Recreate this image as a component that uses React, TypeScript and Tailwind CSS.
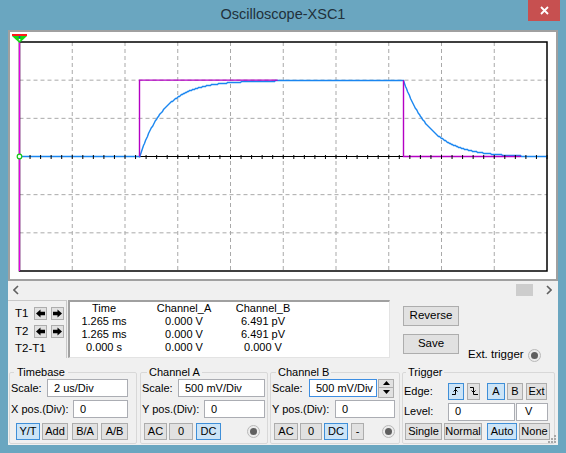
import React from "react";

const btnBase =
  "h-[17px] border flex items-center justify-center text-[11px] leading-none whitespace-nowrap text-black shrink-0";

function Btn({
  children,
  active,
  className = ""
}: {
  children: React.ReactNode;
  active?: boolean;
  className?: string;
}) {
  return (
    <button
      type="button"
      className={`${btnBase} ${
        active ? "bg-[#cce4f7] border-[#3f8fd8]" : "bg-[#e1e1e1] border-[#adadad]"
      } ${className}`}
    >
      {children}
    </button>
  );
}

function Field({
  value,
  focused,
  className = ""
}: {
  value: string;
  focused?: boolean;
  className?: string;
}) {
  return (
    <div
      className={`h-[18px] bg-white border ${
        focused ? "border-[#3d8ee2]" : "border-[#abadb3]"
      } flex items-center pl-[6px] text-[11px] shrink-0 ${className}`}
    >
      {value}
    </div>
  );
}

function Radio() {
  return (
    <span className="w-[13px] h-[13px] rounded-full border border-[#b9b9b9] bg-[#ececec] flex items-center justify-center shrink-0">
      <span className="w-[7px] h-[7px] rounded-full bg-[#5f5f5f]" />
    </span>
  );
}

function ArrowBtn({ dir }: { dir: "l" | "r" }) {
  return (
    <div className="w-[13px] h-[13px] bg-[#e1e1e1] border border-[#adadad] flex items-center justify-center">
      <svg width="9" height="9" viewBox="0 0 10 10">
        <polygon
          points={
            dir === "l"
              ? "0,5 5,0.5 5,3 10,3 10,7 5,7 5,9.5"
              : "10,5 5,0.5 5,3 0,3 0,7 5,7 5,9.5"
          }
          fill="#000"
        />
      </svg>
    </div>
  );
}

function EdgeIcon({ rising }: { rising?: boolean }) {
  return (
    <svg width="10" height="10" viewBox="0 0 10 10" fill="none" stroke="#000" strokeWidth="1">
      {rising ? (
        <>
          <path d="M1 8.5H4.5V1.5H9" />
          <path d="M2.5 5.5L4.5 3.5L6.5 5.5" />
        </>
      ) : (
        <>
          <path d="M1 1.5H4.5V8.5H9" />
          <path d="M2.5 4.5L4.5 6.5L6.5 4.5" />
        </>
      )}
    </svg>
  );
}

function Plot() {
  const x0 = 19.5;
  const x1 = 547;
  const y0 = 42;
  const y1 = 271;
  const dx = (x1 - x0) / 10;
  const dy = (y1 - y0) / 6;
  const yMid = y0 + 3 * dy;
  const yTop = yMid - 2 * dy;
  const up = 139.5;
  const down = 403.5;

  const pts: string[] = [`${x0},${yMid}`, `${up},${yMid}`];
  for (let x = up; x <= down; x += 1) {
    const y = yMid - 2 * dy * (1 - Math.exp(-(x - up) / 25));
    pts.push(`${x},${Math.round(y) + 0.5}`);
  }
  for (let x = down; x <= x1; x += 1) {
    const y = yMid - 2 * dy * Math.exp(-(x - down) / 27);
    pts.push(`${x},${Math.round(y) + 0.5}`);
  }

  const ticks = Array.from({ length: 51 }, (_, i) => x0 + (i * dx) / 5);

  return (
    <svg width="546" height="247" viewBox="10 32 546 247" className="block">
      {/* grid */}
      {Array.from({ length: 9 }, (_, i) => (
        <line
          key={`v${i}`}
          x1={x0 + (i + 1) * dx}
          x2={x0 + (i + 1) * dx}
          y1={y0}
          y2={y1}
          stroke="#a9a9a9"
          strokeWidth="1"
          strokeDasharray="4 3"
        />
      ))}
      {[1, 2, 4, 5].map((j) => (
        <line
          key={`h${j}`}
          x1={x0}
          x2={x1}
          y1={y0 + j * dy}
          y2={y0 + j * dy}
          stroke="#a9a9a9"
          strokeWidth="1"
          strokeDasharray="4 3"
        />
      ))}
      <rect x={x0} y={y0} width={x1 - x0} height={y1 - y0} fill="none" stroke="#000" strokeWidth="1.5" />
      <line x1={x0} x2={x1} y1={yMid} y2={yMid} stroke="#000" strokeWidth="1" />

      {/* channel B */}
      <polyline points={pts.join(" ")} fill="none" stroke="#1a86f0" strokeWidth="1.4" />
      {/* channel A */}
      <path
        d={`M${up} ${yMid}V${yTop}H277.7M${down} ${yTop}V${yMid}H520.7`}
        fill="none"
        stroke="#b400c4"
        strokeWidth="1.4"
      />

      {ticks.map((x, i) => (
        <line key={`t${i}`} x1={x} x2={x} y1={yMid - 1.5} y2={yMid + 2.5} stroke="#000" strokeWidth="1" />
      ))}

      {/* cursor */}
      <line x1={x0} x2={x0} y1={y0} y2={y1} stroke="#e400e4" strokeWidth="1.3" />
      <rect x="12" y="34" width="15" height="2" fill="#ff1a1a" />
      <polygon points="12,36 27,36 19.5,43" fill="#14d814" />
      <rect x="18.8" y="36.5" width="1.5" height="1.5" fill="#1a1aff" />
      <rect x="18.8" y="39" width="1.5" height="1.5" fill="#ffffff" />
      <circle cx={x0} cy={yMid} r="2.3" fill="#fff" stroke="#14c814" strokeWidth="1.2" />
    </svg>
  );
}

const rows = [
  ["Time", "Channel_A", "Channel_B"],
  ["1.265 ms", "0.000 V", "6.491 pV"],
  ["1.265 ms", "0.000 V", "6.491 pV"],
  ["0.000 s", "0.000 V", "0.000 V"]
];

export default function App() {
  return (
    <div className="w-[566px] h-[453px] bg-[#6aa6c0] flex flex-col px-[8px] pb-[8px] font-['Liberation_Sans',Arial,sans-serif] text-black">
      {/* title bar */}
      <div className="relative h-[30px] flex items-center justify-center text-[14.5px] text-[#21313b]">
        Oscilloscope-XSC1
        <div className="absolute top-0 right-[-2px] w-[32px] h-[21px] bg-[#c75050] flex items-center justify-center">
          <svg width="9" height="9" viewBox="0 0 9 9" stroke="#fff" strokeWidth="1.8">
            <path d="M1 1L8 8M8 1L1 8" />
          </svg>
        </div>
      </div>

      <div className="relative flex-1 bg-[#f0f0f0] flex flex-col">
        {/* plot */}
        <div className="h-[251px] border-2 border-[#a0a0a0] bg-white">
          <Plot />
        </div>

        {/* scrollbar */}
        <div className="h-[17px] flex items-center pl-[5px] pr-[6px]">
          <svg width="6" height="10" viewBox="0 0 6 10" fill="none" stroke="#606060" strokeWidth="1.6">
            <path d="M5 1L1 5L5 9" />
          </svg>
          <div className="flex-1" />
          <div className="w-[17px] h-[12px] bg-[#cdcdcd]" />
          <svg width="6" height="10" viewBox="0 0 6 10" fill="none" stroke="#606060" strokeWidth="1.6" className="ml-[13px]">
            <path d="M1 1L5 5L1 9" />
          </svg>
        </div>

        {/* readout row */}
        <div className="h-[60px] flex pt-[2px]">
          <div className="w-[59px] h-[58px] border-t border-r border-[#c8c8c8] pt-[6px] pl-[7px] text-[11.5px]">
            <div className="h-[13px] flex items-center">
              <span className="w-[19px]">T1</span>
              <ArrowBtn dir="l" />
              <div className="w-[4px]" />
              <ArrowBtn dir="r" />
            </div>
            <div className="h-[13px] flex items-center mt-[5px]">
              <span className="w-[19px]">T2</span>
              <ArrowBtn dir="l" />
              <div className="w-[4px]" />
              <ArrowBtn dir="r" />
            </div>
            <div className="mt-[3px] leading-[14px]">T2-T1</div>
          </div>

          <div className="ml-[1px] w-[322px] h-[58px] bg-white border-t-2 border-l-2 border-[#a0a0a0] border-b border-r border-b-[#e3e3e3] border-r-[#e3e3e3]">
            <div className="grid grid-cols-[68px_92px_66px] text-[11px] leading-[13px]">
              {rows.map((r, i) =>
                r.map((c, j) => (
                  <div key={`${i}-${j}`} className="text-center whitespace-nowrap">
                    {c}
                  </div>
                ))
              )}
            </div>
          </div>

          <div className="flex">
            <div className="flex flex-col ml-[13px]">
              <button type="button" className="mt-[6px] w-[56px] h-[20px] bg-[#e1e1e1] border border-[#adadad] text-[11.5px]">
                Reverse
              </button>
              <button type="button" className="mt-[8px] w-[56px] h-[20px] bg-[#e1e1e1] border border-[#adadad] text-[11.5px]">
                Save
              </button>
            </div>
            <div className="self-start mt-[48px] ml-[9px] h-[14px] flex items-center gap-[4px] text-[11.5px] whitespace-nowrap">
              Ext. trigger
              <Radio />
            </div>
          </div>
        </div>

        {/* control groups */}
        <div className="flex mt-[7px] text-[11px]">
          {/* Timebase */}
          <fieldset className="ml-[1px] w-[128px] border border-[#d8d8d8] rounded-[2px] pb-[3px]">
            <legend className="ml-[4px] px-[3px] leading-[14px]">Timebase</legend>
            <div className="h-[18px] flex items-center pl-[1px]">
              <span className="w-[36px]">Scale:</span>
              <Field value="2 us/Div" className="w-[81px] pl-[5px]" />
            </div>
            <div className="h-[18px] flex items-center pl-[1px] mt-[3px]">
              <span className="w-[62px] whitespace-nowrap">X pos.(Div):</span>
              <Field value="0" className="w-[55px]" />
            </div>
            <div className="h-[17px] flex items-center pl-[6px] mt-[5px]">
              <Btn active className="w-[24px]">Y/T</Btn>
              <Btn className="w-[26px] ml-[2px]">Add</Btn>
              <Btn className="w-[26px] ml-[4px]">B/A</Btn>
              <Btn className="w-[27px] ml-[3px]">A/B</Btn>
            </div>
          </fieldset>

          {/* Channel A */}
          <fieldset className="ml-[3px] w-[128px] border border-[#d8d8d8] rounded-[2px] pb-[3px]">
            <legend className="ml-[6px] px-[2px] leading-[14px]">Channel A</legend>
            <div className="h-[18px] flex items-center pl-[1px]">
              <span className="w-[36px]">Scale:</span>
              <Field value="500 mV/Div" className="w-[87px]" />
            </div>
            <div className="h-[18px] flex items-center pl-[1px] mt-[3px]">
              <span className="w-[62px] whitespace-nowrap">Y pos.(Div):</span>
              <Field value="0" className="w-[61px]" />
            </div>
            <div className="h-[17px] flex items-center pl-[3px] mt-[5px]">
              <Btn className="w-[23px]">AC</Btn>
              <Btn className="w-[24px] ml-[2px]">0</Btn>
              <Btn active className="w-[25px] ml-[3px]">DC</Btn>
              <div className="ml-[26px]">
                <Radio />
              </div>
            </div>
          </fieldset>

          {/* Channel B */}
          <fieldset className="ml-[2px] w-[130px] border border-[#d8d8d8] rounded-[2px] pb-[3px]">
            <legend className="ml-[5px] px-[2px] leading-[14px]">Channel B</legend>
            <div className="h-[18px] flex items-center pl-[1px]">
              <span className="w-[37px]">Scale:</span>
              <Field value="500 mV/Div" focused className="w-[68px]" />
              <div className="ml-[1px] w-[16px] h-[19px] flex flex-col">
                <div className="h-[9.5px] bg-[#e1e1e1] border border-[#adadad] flex items-center justify-center">
                  <svg width="7" height="4" viewBox="0 0 7 4">
                    <polygon points="0,4 3.5,0 7,4" fill="#000" />
                  </svg>
                </div>
                <div className="h-[9.5px] bg-[#e1e1e1] border border-t-0 border-[#adadad] flex items-center justify-center">
                  <svg width="7" height="4" viewBox="0 0 7 4">
                    <polygon points="0,0 7,0 3.5,4" fill="#000" />
                  </svg>
                </div>
              </div>
            </div>
            <div className="h-[18px] flex items-center pl-[1px] mt-[3px]">
              <span className="w-[63px] whitespace-nowrap">Y pos.(Div):</span>
              <Field value="0" className="w-[60px]" />
            </div>
            <div className="h-[17px] flex items-center pl-[3px] mt-[5px]">
              <Btn className="w-[24px]">AC</Btn>
              <Btn className="w-[22px] ml-[2px]">0</Btn>
              <Btn active className="w-[24px] ml-[2px]">DC</Btn>
              <Btn className="w-[13px] ml-[3px]">-</Btn>
              <div className="ml-[18px]">
                <Radio />
              </div>
            </div>
          </fieldset>

          {/* Trigger */}
          <fieldset className="ml-[2px] w-[153px] border border-[#d8d8d8] rounded-[2px] pb-[3px]">
            <legend className="ml-[3px] px-[2px] leading-[14px]">Trigger</legend>
            <div className="h-[14px] flex items-center pl-[1px] mt-[5px]">
              <span className="w-[44px]">Edge:</span>
              <Btn active className="w-[16px] h-[14px]">
                <EdgeIcon rising />
              </Btn>
              <Btn className="w-[13px] h-[14px] ml-[3px]">
                <EdgeIcon />
              </Btn>
              <Btn active className="w-[18px] h-[14px] ml-[7px]">A</Btn>
              <Btn className="w-[16px] h-[14px] ml-[2px]">B</Btn>
              <Btn className="w-[21px] h-[14px] ml-[3px]">Ext</Btn>
            </div>
            <div className="h-[17px] flex items-center pl-[1px] mt-[5px]">
              <span className="w-[44px]">Level:</span>
              <Field value="0" className="w-[67px] h-[17px]" />
              <Field value="V" className="w-[32px] h-[17px] ml-[1px] pl-[8px]" />
            </div>
            <div className="h-[17px] flex items-center pl-[2px] mt-[3px]">
              <Btn className="w-[37px]">Single</Btn>
              <Btn className="w-[38px] ml-[2px]">Normal</Btn>
              <Btn active className="w-[30px] ml-[5px]">Auto</Btn>
              <Btn className="w-[31px] ml-[2px]">None</Btn>
            </div>
          </fieldset>
        </div>

        {/* resize grip */}
        <svg width="8" height="8" viewBox="0 0 8 8" className="absolute right-[2px] bottom-[2px]" fill="#a8a8a8">
          <rect x="6" y="0" width="2" height="2" />
          <rect x="3" y="3" width="2" height="2" />
          <rect x="6" y="3" width="2" height="2" />
          <rect x="0" y="6" width="2" height="2" />
          <rect x="3" y="6" width="2" height="2" />
          <rect x="6" y="6" width="2" height="2" />
        </svg>
      </div>
    </div>
  );
}
